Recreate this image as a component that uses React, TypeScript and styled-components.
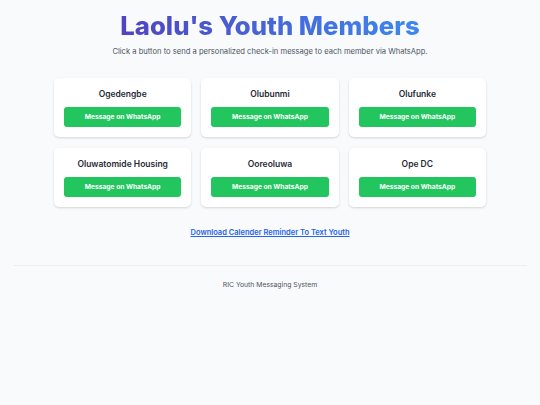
import React from "react";
import styled, { createGlobalStyle } from "styled-components";

const GlobalStyle = createGlobalStyle`
  html, body {
    margin: 0;
    padding: 0;
    background: #f8fafc;
    font-family: Inter, "Noto Sans", "Liberation Sans", sans-serif;
  }
`;

const Page = styled.div`
  min-height: 405px;
  padding: 10px 13px 0;
  box-sizing: border-box;
  display: flex;
  flex-direction: column;
  align-items: center;
`;

const Title = styled.h1`
  margin: 0;
  font-size: 25.7px;
  line-height: 32px;
  font-weight: 800;
  background: linear-gradient(90deg, #5043c2, #3d88ee);
  -webkit-background-clip: text;
  background-clip: text;
  color: transparent;
`;

const Subtitle = styled.p`
  margin: 4px 0 0;
  font-size: 7.6px;
  line-height: 12px;
  color: #4b5563;
`;

const Grid = styled.div`
  margin-top: 20px;
  width: 432px;
  display: grid;
  grid-template-columns: repeat(3, 1fr);
  column-gap: 10px;
  row-gap: 11px;
`;

const Card = styled.div`
  background: #ffffff;
  border-radius: 5px;
  box-shadow: 0 1px 3px rgba(0, 0, 0, 0.1), 0 1px 2px rgba(0, 0, 0, 0.06);
  padding: 10px;
  display: flex;
  flex-direction: column;
  align-items: stretch;
`;

const Name = styled.div`
  text-align: center;
  font-size: 8.5px;
  line-height: 12px;
  font-weight: 600;
  color: #1f2937;
`;

const WaButton = styled.button`
  margin-top: 7px;
  height: 20px;
  border: none;
  border-radius: 3px;
  background: #22c55e;
  color: #ffffff;
  font-family: inherit;
  font-size: 6.7px;
  font-weight: 700;
  cursor: pointer;
`;

const LinkText = styled.a`
  margin-top: 20px;
  font-size: 7.5px;
  line-height: 12px;
  font-weight: 600;
  color: #2563eb;
  text-decoration: underline;
`;

const Footer = styled.footer`
  margin-top: 26px;
  width: 100%;
  border-top: 1px solid #eceff3;
  padding-top: 13px;
  text-align: center;
  font-size: 6.8px;
  line-height: 11px;
  color: #4b5563;
`;

const members = [
  "Ogedengbe",
  "Olubunmi",
  "Olufunke",
  "Oluwatomide Housing",
  "Ooreoluwa",
  "Ope DC",
];

export default function App() {
  return (
    <>
      <GlobalStyle />
      <Page>
        <Title>Laolu's Youth Members</Title>
        <Subtitle>
          Click a button to send a personalized check-in message to each member via WhatsApp.
        </Subtitle>
        <Grid>
          {members.map((m) => (
            <Card key={m}>
              <Name>{m}</Name>
              <WaButton>Message on WhatsApp</WaButton>
            </Card>
          ))}
        </Grid>
        <LinkText href="#">Download Calender Reminder To Text Youth</LinkText>
        <Footer>RIC Youth Messaging System</Footer>
      </Page>
    </>
  );
}
